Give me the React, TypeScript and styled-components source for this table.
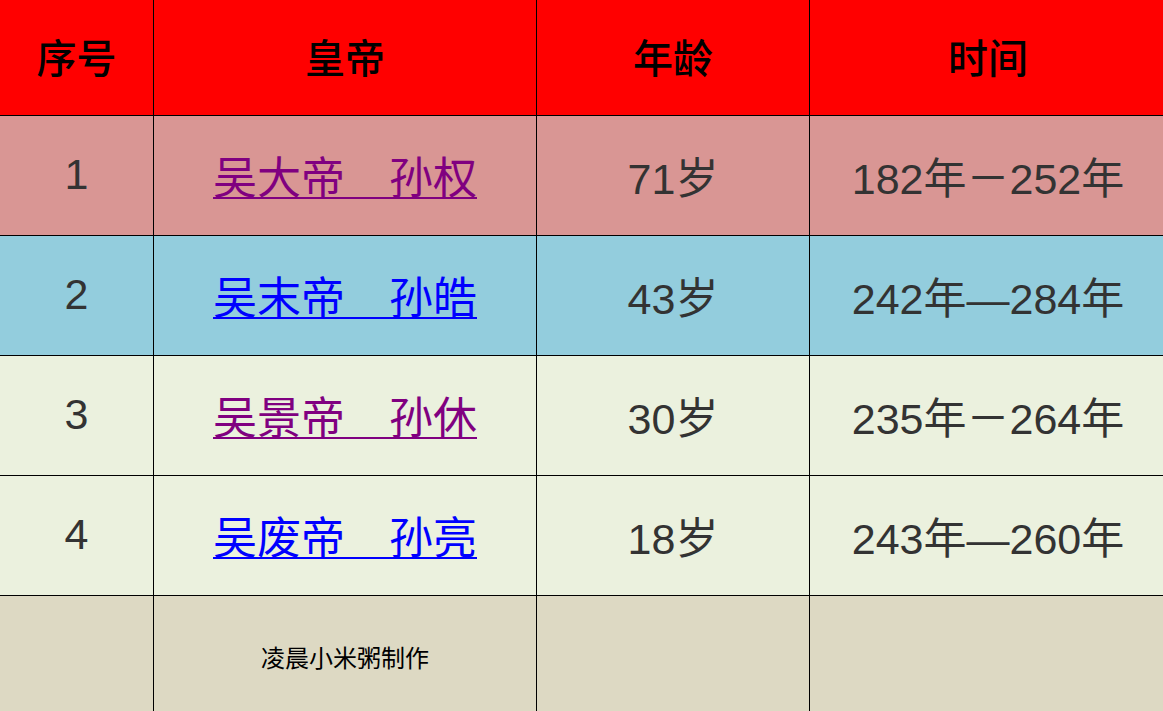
import React from 'react';
import styled, { createGlobalStyle } from 'styled-components';

interface Emperor {
  id: string;
  name: string;
  visited: boolean;
  age: string;
  period: string;
  bg: string;
}

const emperors: Emperor[] = [
  { id: '1', name: '吴大帝　孙权', visited: true, age: '71岁', period: '182年－252年', bg: '#d99694' },
  { id: '2', name: '吴末帝　孙皓', visited: false, age: '43岁', period: '242年—284年', bg: '#93cddd' },
  { id: '3', name: '吴景帝　孙休', visited: true, age: '30岁', period: '235年－264年', bg: '#ebf1de' },
  { id: '4', name: '吴废帝　孙亮', visited: false, age: '18岁', period: '243年—260年', bg: '#ebf1de' },
];

const GlobalStyle = createGlobalStyle`
  html, body {
    margin: 0;
    padding: 0;
    overflow: hidden;
    background: #ffffff;
  }
`;

const StyledTable = styled.table`
  border-collapse: separate;
  border-spacing: 0;
  table-layout: fixed;
  width: 1167px;
`;

const StyledCol = styled.col<{ $width: number }>`
  width: ${(p) => p.$width}px;
`;

const StyledHeadCell = styled.th`
  box-sizing: border-box;
  height: 116px;
  padding: 0 0 4px;
  background: #ff0000;
  border-right: 1px solid #000;
  border-bottom: 1px solid #000;
  color: #000;
  font-family: 'Liberation Serif', 'Noto Sans CJK SC', serif;
  font-size: 40px;
  font-weight: 500;
  text-align: center;
  vertical-align: middle;
`;

const StyledCell = styled.td<{ $bg: string }>`
  box-sizing: border-box;
  height: 120px;
  padding: 0 0 2px;
  background: ${(p) => p.$bg};
  border-right: 1px solid #000;
  border-bottom: 1px solid #000;
  color: #333333;
  font-family: 'Liberation Sans', 'Noto Sans CJK SC', sans-serif;
  font-size: 43px;
  text-align: center;
  vertical-align: middle;
`;

const StyledLink = styled.a<{ $visited: boolean }>`
  color: ${(p) => (p.$visited ? '#800080' : '#0000ff')};
  font-family: 'Liberation Serif', 'Noto Sans CJK SC', serif;
  font-size: 44px;
  text-decoration: underline;
  text-decoration-thickness: 2px;
  text-underline-offset: 3px;
`;

const StyledCredit = styled.span`
  display: inline-block;
  margin-bottom: 8px;
  color: #000;
  font-family: 'Noto Sans CJK SC', sans-serif;
  font-size: 24px;
`;

const App: React.FC = () => {
  return (
    <>
      <GlobalStyle />
      <StyledTable>
        <colgroup>
          <StyledCol $width={154} />
          <StyledCol $width={383} />
          <StyledCol $width={273} />
          <StyledCol $width={357} />
        </colgroup>
        <thead>
          <tr>
            <StyledHeadCell>序号</StyledHeadCell>
            <StyledHeadCell>皇帝</StyledHeadCell>
            <StyledHeadCell>年龄</StyledHeadCell>
            <StyledHeadCell>时间</StyledHeadCell>
          </tr>
        </thead>
        <tbody>
          {emperors.map((e) => (
            <tr key={e.id}>
              <StyledCell $bg={e.bg}>{e.id}</StyledCell>
              <StyledCell $bg={e.bg}>
                <StyledLink href="#" $visited={e.visited}>
                  {e.name}
                </StyledLink>
              </StyledCell>
              <StyledCell $bg={e.bg}>{e.age}</StyledCell>
              <StyledCell $bg={e.bg}>{e.period}</StyledCell>
            </tr>
          ))}
          <tr>
            <StyledCell $bg="#ddd9c3" />
            <StyledCell $bg="#ddd9c3">
              <StyledCredit>凌晨小米粥制作</StyledCredit>
            </StyledCell>
            <StyledCell $bg="#ddd9c3" />
            <StyledCell $bg="#ddd9c3" />
          </tr>
        </tbody>
      </StyledTable>
    </>
  );
};

export default App;
